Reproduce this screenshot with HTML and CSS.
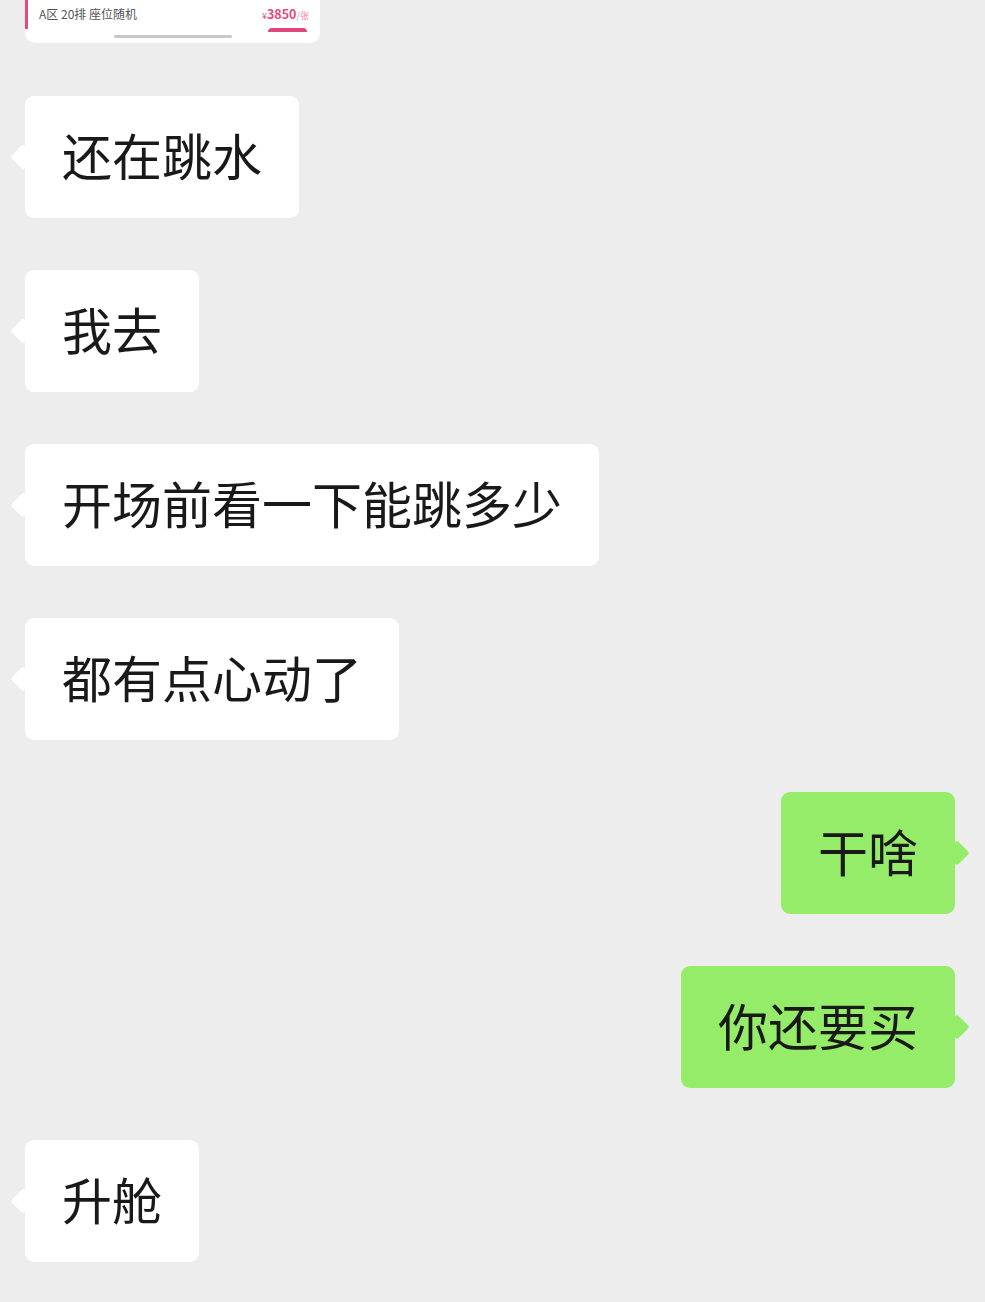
FILE: index.html
```html
<!DOCTYPE html>
<html lang="zh">
<head>
<meta charset="utf-8">
<link rel="stylesheet" href="styles.css">
</head>
<body>
<div class="chat">
  <div class="card">
    <div class="card-row">
      <div class="accent"></div>
      <div class="seat">A区 20排 座位随机</div>
      <div class="price-col">
        <div class="price"><span class="yen">¥</span>3850<span class="unit">/张</span></div>
        <div class="pill"></div>
      </div>
    </div>
    <div class="handle"></div>
  </div>

  <div class="msg left"><div class="bubble">还在跳水</div></div>
  <div class="msg left"><div class="bubble">我去</div></div>
  <div class="msg left"><div class="bubble">开场前看一下能跳多少</div></div>
  <div class="msg left"><div class="bubble">都有点心动了</div></div>
  <div class="msg right"><div class="bubble">干啥</div></div>
  <div class="msg right"><div class="bubble">你还要买</div></div>
  <div class="msg left"><div class="bubble">升舱</div></div>
</div>
</body>
</html>
```
FILE: styles.css
```css
html, body {
  margin: 0;
  padding: 0;
  background: #ededed;
  font-family: "Noto Sans CJK SC", "Noto Sans", sans-serif;
}
.chat {
  width: 985px;
  height: 1302px;
  overflow: hidden;
  padding: 0 30px 0 25px;
  box-sizing: border-box;
  display: flex;
  flex-direction: column;
  gap: 52px;
}
.card {
  width: 295px;
  height: 43px;
  background: #fff;
  border-radius: 0 0 10px 10px;
  display: flex;
  flex-direction: column;
  margin-bottom: 1px;
}
.card-row {
  height: 30px;
  display: flex;
  align-items: flex-start;
}
.accent {
  width: 3px;
  height: 29px;
  background: #e8487a;
}
.seat {
  margin-left: 11px;
  margin-top: 5px;
  font-size: 12px;
  line-height: 17px;
  color: #555;
  flex: 1;
}
.price-col {
  width: 54px;
  margin-right: 11px;
  display: flex;
  flex-direction: column;
  align-items: flex-end;
}
.price {
  margin-top: 5px;
  font-size: 12.5px;
  line-height: 17px;
  font-weight: 700;
  color: #e8487a;
  white-space: nowrap;
}
.yen { font-size: 9px; font-weight: 400; }
.unit { font-size: 9px; font-weight: 400; color: #ee8aab; }
.pill {
  width: 39px;
  height: 4px;
  margin-top: 4px;
  margin-right: 2px;
  background: #e0457b;
  border-radius: 4px 4px 0 0;
}
.handle {
  width: 118px;
  height: 3px;
  background: #c8c8c8;
  border-radius: 2px;
  margin: 5px auto 0;
}
.msg {
  display: flex;
}
.msg.right { justify-content: flex-end; }
.bubble {
  position: relative;
  height: 122px;
  box-sizing: border-box;
  padding: 0 37px 6px 37px;
  display: flex;
  align-items: center;
  font-size: 50px;
  color: #191919;
  background: #fff;
  border-radius: 9px;
  white-space: nowrap;
}
.right .bubble { background: #95ec69; }
.bubble::before {
  content: "";
  position: absolute;
  top: 50%;
  width: 18px;
  height: 18px;
  background: inherit;
  border-radius: 3px;
  transform: translateY(-50%) rotate(45deg);
}
.left .bubble::before { left: -11px; }
.right .bubble::before { right: -11px; }
```
